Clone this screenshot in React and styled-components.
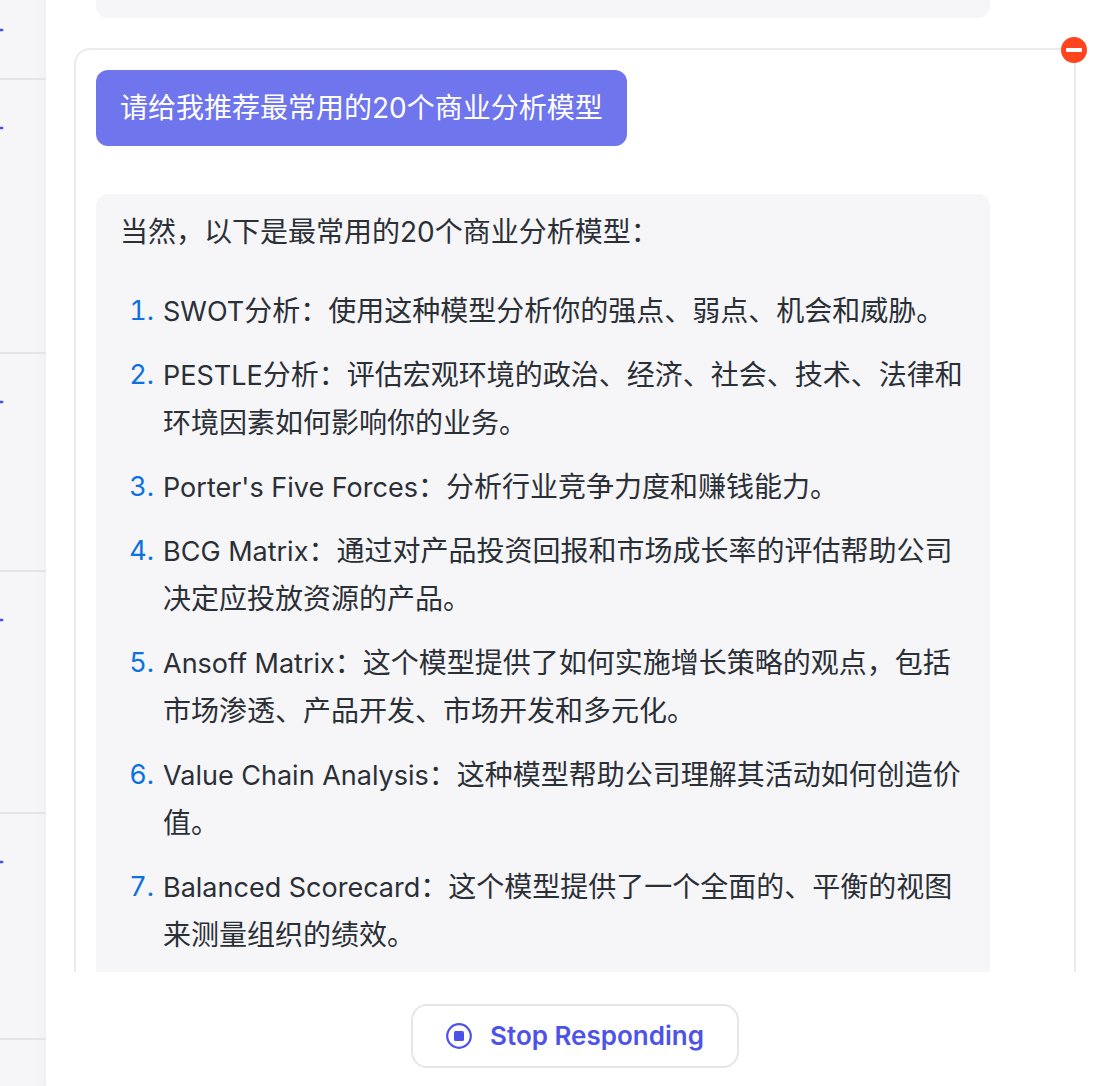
import React from 'react';
import styled, { createGlobalStyle } from 'styled-components';

const GlobalStyle = createGlobalStyle`
  * { box-sizing: border-box; }
  body {
    margin: 0;
    background: #ffffff;
    color: #2b2f36;
    font-family: Inter, "Noto Sans CJK SC", sans-serif;
  }
`;

const Shell = styled.div`
  display: flex;
  height: 100vh;
  overflow: hidden;
`;

const Sidebar = styled.aside`
  flex: 0 0 46px;
  overflow: hidden;
  background: linear-gradient(to left, #ececef 0, #f3f3f5 2px, #f6f6f9 10px);
`;

const HistoryList = styled.ul`
  margin: -18px 0 0;
  padding: 0;
  list-style: none;
`;

const HistoryItem = styled.li`
  height: ${(p) => p.$height}px;
  padding-top: 46px;
  border-bottom: 2px solid #e4e4e7;
`;

const Dash = styled.svg`
  display: block;
  color: #4b50e8;
`;

const Main = styled.main`
  flex: 1;
  min-width: 0;
  display: flex;
  flex-direction: column;
  padding: 0 26px 0 28px;
`;

const Thread = styled.section`
  flex: 1;
  min-height: 0;
  display: flex;
  flex-direction: column;
  gap: 30px;
`;

const PreviousAnswer = styled.div`
  flex: none;
  height: 18px;
  margin: 0 86px 0 22px;
  border-radius: 0 0 12px 12px;
  background: #f6f6f9;
`;

const Frame = styled.article`
  position: relative;
  flex: 1;
  min-height: 0;
  display: flex;
  flex-direction: column;
  align-items: flex-start;
  gap: 48px;
  padding: 20px 84px 0 20px;
  border: 2px solid #ebebec;
  border-bottom: 0;
  border-radius: 16px 16px 0 0;
`;

const RemoveButton = styled.button`
  position: absolute;
  top: -13px;
  right: -13px;
  width: 26px;
  height: 26px;
  padding: 0;
  border: 0;
  border-radius: 50%;
  background: none;
  cursor: pointer;

  svg { display: block; }
`;

const Question = styled.p`
  flex: none;
  margin: 0;
  padding: 14px 24px;
  border-radius: 12px;
  background: #6f75ed;
  color: #ffffff;
  font-size: 28px;
  line-height: 48px;
`;

const Answer = styled.div`
  flex: 1;
  min-height: 0;
  width: 100%;
  overflow: hidden;
  padding: 14px 24px 0;
  border-radius: 12px 12px 0 0;
  background: #f6f6f9;
  font-size: 28px;
  line-height: 48px;
`;

const Intro = styled.p`
  margin: 0 0 31px;
`;

const ModelList = styled.ol`
  display: flex;
  flex-direction: column;
  gap: 16px;
  margin: 0;
  padding: 0;
  list-style: none;
  counter-reset: model;
`;

const ModelItem = styled.li`
  display: grid;
  grid-template-columns: 34px 1fr;
  column-gap: 9px;
  counter-increment: model;

  &::before {
    content: counter(model) ".";
    color: #0b72e0;
    font-size: 27px;
    font-variant-numeric: tabular-nums;
    text-align: right;
  }
`;

const ModelName = styled.span`
  font-size: 27px;
  line-height: 32px;
`;

const Footer = styled.footer`
  flex: none;
  display: flex;
  justify-content: center;
  padding: 32px 0 18px;
`;

const StopButton = styled.button`
  display: flex;
  align-items: center;
  gap: 18px;
  height: 64px;
  padding: 0 33px;
  border: 2px solid #e6e6e8;
  border-radius: 16px;
  background: #ffffff;
  color: #4d53e8;
  font: 600 26px/32px Inter, sans-serif;
  cursor: pointer;
`;

const history = [98, 274, 218, 242, 226, 226];

const models = [
  ['SWOT', '分析：使用这种模型分析你的强点、弱点、机会和威胁。'],
  ['PESTLE', '分析：评估宏观环境的政治、经济、社会、技术、法律和环境因素如何影响你的业务。'],
  ["Porter's Five Forces", '：分析行业竞争力度和赚钱能力。'],
  ['BCG Matrix', '：通过对产品投资回报和市场成长率的评估帮助公司决定应投放资源的产品。'],
  ['Ansoff Matrix', '：这个模型提供了如何实施增长策略的观点，包括市场渗透、产品开发、市场开发和多元化。'],
  ['Value Chain Analysis', '：这种模型帮助公司理解其活动如何创造价值。'],
  ['Balanced Scorecard', '：这个模型提供了一个全面的、平衡的视图来测量组织的绩效。'],
];

export default function App() {
  return (
    <Shell lang="zh-CN">
      <GlobalStyle />
      <Sidebar>
        <HistoryList>
          {history.map((height, i) => (
            <HistoryItem key={i} $height={height}>
              <Dash width="4" height="4" viewBox="0 0 4 4" aria-hidden="true">
                <path d="M-2 2H2.2" stroke="currentColor" strokeWidth="2.5" strokeLinecap="round" />
              </Dash>
            </HistoryItem>
          ))}
        </HistoryList>
      </Sidebar>
      <Main>
        <Thread>
          <PreviousAnswer />
          <Frame>
            <RemoveButton type="button" aria-label="删除">
              <svg width="26" height="26" viewBox="0 0 26 26" aria-hidden="true">
                <circle cx="13" cy="13" r="13" fill="#ff441e" />
                <rect x="5" y="11" width="16" height="4" rx="1" fill="#ffffff" />
              </svg>
            </RemoveButton>
            <Question>请给我推荐最常用的20个商业分析模型</Question>
            <Answer>
              <Intro>当然，以下是最常用的20个商业分析模型：</Intro>
              <ModelList>
                {models.map(([name, description]) => (
                  <ModelItem key={name}>
                    <div>
                      <ModelName>{name}</ModelName>
                      {description}
                    </div>
                  </ModelItem>
                ))}
              </ModelList>
            </Answer>
          </Frame>
        </Thread>
        <Footer>
          <StopButton type="button">
            <svg width="26" height="26" viewBox="0 0 26 26" fill="none" aria-hidden="true">
              <circle cx="13" cy="13" r="11.8" stroke="currentColor" strokeWidth="2.2" />
              <rect x="8" y="8" width="10" height="10" rx="1.5" fill="currentColor" />
            </svg>
            Stop Responding
          </StopButton>
        </Footer>
      </Main>
    </Shell>
  );
}
